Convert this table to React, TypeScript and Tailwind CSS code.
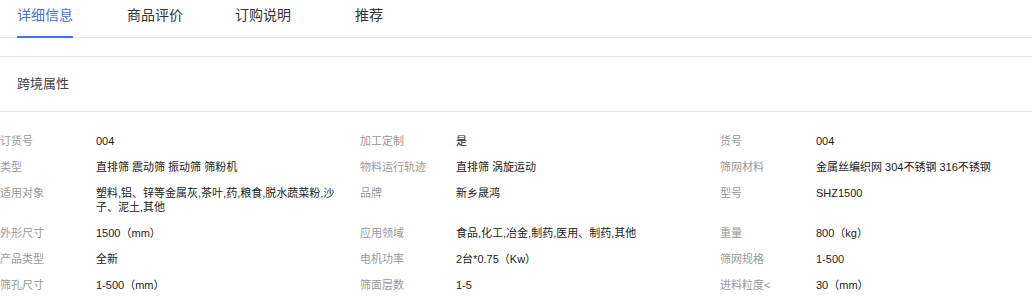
const tabs = [
  { name: "详细信息", gap: "ml-[17px]", active: true },
  { name: "商品评价", gap: "ml-[54px]", active: false },
  { name: "订购说明", gap: "ml-[52px]", active: false },
  { name: "推荐", gap: "ml-[64px]", active: false },
];

// attribute rows, three label/value pairs per row
const rows: [string, string][][] = [
  [["订货号", "004"], ["加工定制", "是"], ["货号", "004"]],
  [["类型", "直排筛 震动筛 振动筛 筛粉机"], ["物料运行轨迹", "直排筛 涡旋运动"], ["筛网材料", "金属丝编织网 304不锈钢 316不锈钢"]],
  [["适用对象", "塑料,铝、锌等金属灰,茶叶,药,粮食,脱水蔬菜粉,沙子、泥土,其他"], ["品牌", "新乡晟鸿"], ["型号", "SHZ1500"]],
  [["外形尺寸", "1500（mm）"], ["应用领域", "食品,化工,冶金,制药,医用、制药,其他"], ["重量", "800（kg）"]],
  [["产品类型", "全新"], ["电机功率", "2台*0.75（Kw）"], ["筛网规格", "1-500"]],
  [["筛孔尺寸", "1-500（mm）"], ["筛面层数", "1-5"], ["进料粒度<", "30（mm）"]],
];

export default function App() {
  return (
    <div className="w-[1032px] h-[297px] overflow-hidden bg-white font-['Liberation_Sans','Noto_Sans_CJK_SC',sans-serif]">
      {/* Tabs */}
      <div className="flex h-[38px] border-b border-[#e6e6e6]">
        {tabs.map((t) => (
          <div
            key={t.name}
            className={`relative h-full pt-[5px] text-[14px] leading-[20px] ${t.gap} ${
              t.active ? "text-[#4470f0]" : "text-[#333]"
            }`}
          >
            {t.name}
            {t.active && <div className="absolute left-0 right-0 bottom-[-1px] h-[2px] bg-[#4470f0]" />}
          </div>
        ))}
      </div>

      <div className="h-[18px]" />

      {/* Section title */}
      <div className="flex h-[56px] items-center border-y border-[#e6e6e6] pl-[17px] text-[13px] text-[#444]">
        跨境属性
      </div>

      {/* Attribute table */}
      <div className="pt-[16px] text-[11px] leading-[14px]">
        {rows.map((row, i) => (
          <div key={i} className="grid grid-cols-[360px_360px_312px]">
            {row.map(([label, value]) => (
              <div key={label} className="flex py-[6px]">
                <div className="w-[96px] shrink-0 text-[#999]">{label}</div>
                <div className="w-[244px] text-[#222]">{value}</div>
              </div>
            ))}
          </div>
        ))}
      </div>
    </div>
  );
}
